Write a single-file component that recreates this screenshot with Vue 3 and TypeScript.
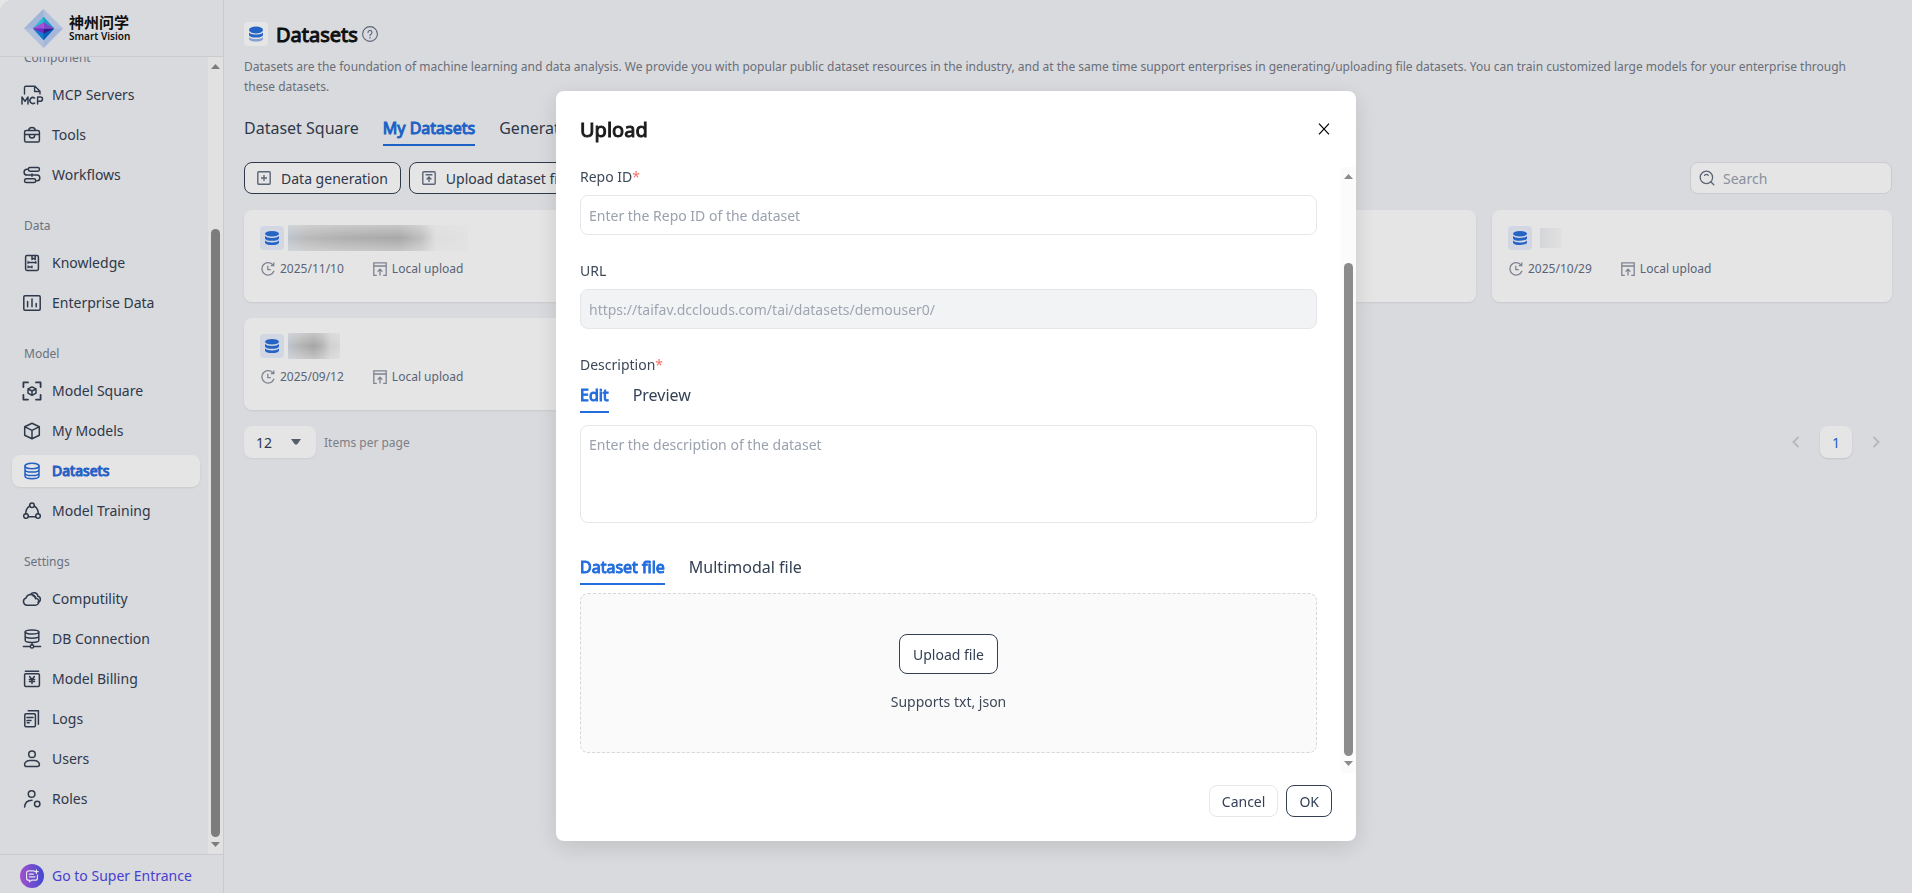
<script setup lang="ts">
import { ref } from 'vue'

interface NavItem { label: string; icon: string }
interface NavGroup { title: string; items: NavItem[] }
interface Card { date: string; mask: string }

const icons: Record<string, string> = {
  mcp: '<path d="M2.5 9V2.500a1.200 1.200 0 0 1 1.200-1.200H13l5 5V9M12.600 1.500v5h5.200" stroke-width="1.400"/><path d="M0 19v-7l3 4.400L6 12v7M12.600 13a3 3 0 1 0 0 5M15.600 19v-7h2.800a2.100 2.100 0 0 1 0 4.200h-2.800" stroke-width="1.500"/>',
  tools: '<rect x="2.6" y="5.4" width="14.8" height="11.6" rx="1.6"/><path d="M6.8 5.2c0-2 .8-2.8 3.2-2.8s3.2.8 3.2 2.8M2.8 9.4h14.4M7.4 9.6v1.2a2.6 2.2 0 0 0 5.2 0V9.600"/>',
  flow: '<rect x="6.4" y="2.4" width="11" height="3.8" rx="1.6"/><rect x="2.600" y="13.8" width="11" height="3.800" rx="1.600"/><path d="M6.200 4.300H5a2.900 2.900 0 0 0 0 5.800h10a2.800 2.800 0 0 1 0 5.600h-1.200M10 8.900v2.400"/>',
  book: '<rect x="3.600" y="2.600" width="12.800" height="14.800" rx="1.400"/><path d="M10 2.800v3.600l1.600-1 1.600 1V2.800M6.400 9.400h7.400M6.400 13.900h3.400" /><path d="M6 8.200v2.400M13.800 8.200v2.400M6 12.800v2.200M10 12.800v2.200" stroke-width="1"/>',
  chart: '<rect x="1.800" y="2.800" width="16.400" height="14.400" rx="1.200"/><path d="M5.600 8.600v5.200M10 6v7.800M14.200 10.400v3.400"/>',
  square: '<path d="M1.400 6V1.400H6M14 1.400h4.600V6M18.600 14v4.600H14M6 18.600H1.400V14" stroke-width="1.800"/><path d="M10 5.800l4 2.100v4.300l-4 2.200-4-2.200V7.900zM6.200 8l3.800 2 3.800-2M10 10v4.200" stroke-width="1.500"/>',
  cube: '<path d="M10 2.200l7.300 3.500v8.600L10 17.800l-7.300-3.500V5.700zM2.900 5.900L10 9.400l7.100-3.500M10 9.400v8.200"/>',
  db: '<ellipse cx="10" cy="5" rx="7" ry="2.800"/><path d="M3 5v10c0 1.500 3.100 2.700 7 2.700s7-1.200 7-2.700V5M3 8.400c0 1.500 3.100 2.700 7 2.700s7-1.200 7-2.700M3 11.900c0 1.500 3.100 2.700 7 2.700s7-1.200 7-2.700"/>',
  train: '<circle cx="10" cy="4.200" r="2.300"/><circle cx="4" cy="15" r="2.300"/><circle cx="16" cy="15" r="2.300"/><path d="M7.800 5C5.200 6.500 3.600 9.500 3.800 12.600M12.200 5c2.600 1.500 4.200 4.500 4 7.600M6.400 15.800h7.200"/>',
  cloud: '<path d="M4.600 16.200a3.700 3.700 0 0 1-.5-7.200 4.900 4.900 0 0 1 9.400.2 3.500 3.500 0 0 1-.3 7z"/><path d="M8.600 5.500a4 4 0 0 1 7.300 1.800 3 3 0 0 1 0 5.900M11 6.800c1.700.2 2.800 1.600 2.700 3"/>',
  dbnet: '<ellipse cx="10" cy="3" rx="6.800" ry="2"/><path d="M3.200 3v8.200c0 1.200 3 2.200 6.800 2.200s6.800-1 6.800-2.200V3M3.200 7c0 1.200 3 2.200 6.800 2.200S16.800 8.200 16.800 7M10 13.400v2.400M1.400 17.400h6.800M11.800 17.400h6.800"/><circle cx="10" cy="17.400" r="1.700"/>',
  bill: '<path d="M3.400 2.200h13.200"/><rect x="2.600" y="4.800" width="14.800" height="12.600" rx="1.200"/><path d="M7.600 7.600l2.400 2.800 2.400-2.800M7.400 10.600h5.200M7.400 12.600h5.200M10 10.600v4"/>',
  logs: '<path d="M6.200 1.800h10.200v13.400"/><rect x="2.800" y="4.800" width="10.600" height="13" rx="1.200"/><path d="M5 8.600h6M5 11.400h4M5.200 13.800h2"/>',
  user: '<circle cx="10" cy="5.200" r="3.300"/><path d="M2.600 15.600c0-2.400 2.600-4.200 5.200-4.200h4.400c2.600 0 5.200 1.800 5.200 4.200 0 1.400-.8 2-2 2H4.600c-1.200 0-2-.6-2-2z"/>',
  role: '<circle cx="9.600" cy="5" r="3.300"/><path d="M2.600 18c.3-4.200 3-6.800 7.400-6.800"/><circle cx="15.200" cy="15" r="2.700"/>',
}

const groups: NavGroup[] = [
  { title: 'Component', items: [
    { label: 'MCP Servers', icon: 'mcp' }, { label: 'Tools', icon: 'tools' }, { label: 'Workflows', icon: 'flow' } ] },
  { title: 'Data', items: [
    { label: 'Knowledge', icon: 'book' }, { label: 'Enterprise Data', icon: 'chart' } ] },
  { title: 'Model', items: [
    { label: 'Model Square', icon: 'square' }, { label: 'My Models', icon: 'cube' },
    { label: 'Datasets', icon: 'db' }, { label: 'Model Training', icon: 'train' } ] },
  { title: 'Settings', items: [
    { label: 'Computility', icon: 'cloud' }, { label: 'DB Connection', icon: 'dbnet' }, { label: 'Model Billing', icon: 'bill' },
    { label: 'Logs', icon: 'logs' }, { label: 'Users', icon: 'user' }, { label: 'Roles', icon: 'role' } ] },
]

const cards: Card[] = [
  { date: '2025/11/10', mask: 'long' },
  { date: '2025/11/05', mask: 'short' },
  { date: '2025/10/31', mask: 'short' },
  { date: '2025/10/29', mask: 'tiny' },
  { date: '2025/09/12', mask: 'short' },
]

const activeNav = ref('Datasets')
const pageTab = ref('My Datasets')
const pageTabs = ['Dataset Square', 'My Datasets', 'Generation Tasks']
const editTab = ref('Edit')
const fileTab = ref('Dataset file')
const open = ref(true)
</script>

<template>
  <div class="app">
    <aside class="sidebar">
      <div class="brand">
        <svg class="gem" viewBox="0 0 40 40" aria-hidden="true">
          <path d="M20 0l20 20-20 20L0 20z" fill="#c6d7f5" />
          <path d="M20 0L0 20h20z" fill="#b4caf4" /><path d="M20 40l20-20H20z" fill="#b9cdf3" />
          <path d="M20 8L9 20l11-5 11 5z" fill="#2ed3e6" />
          <path d="M20 8v8l11 4z" fill="#27a9e0" />
          <path d="M20 32L9 20l11 2 11-2z" fill="#1587e8" />
          <path d="M20 32V21l11-1z" fill="#0a6ad0" />
          <path d="M20 13.500L9 20l11 5z" fill="#b45cf0" />
          <path d="M20 13.500L31 20H20z" fill="#8f4be8" />
          <path d="M9 20h11v5z" fill="#7a35d8" />
          <path d="M20 20h11l-11 5z" fill="#3a1ca0" />
        </svg>
        <div class="brand-text">
          <span class="brand-cn">神州问学</span>
          <span class="brand-en">Smart Vision</span>
        </div>
      </div>
      <div class="nav-scroll">
        <nav class="nav">
          <section v-for="g in groups" :key="g.title" class="group">
            <h2 class="group-title">{{ g.title }}</h2>
            <a v-for="i in g.items" :key="i.label" href="#" class="nav-item" :class="{ active: i.label === activeNav }"
              @click.prevent="activeNav = i.label">
              <svg class="nav-icon" viewBox="0 0 20 20" aria-hidden="true" v-html="icons[i.icon]"></svg>
              <span>{{ i.label }}</span>
            </a>
          </section>
        </nav>
        <div class="scrollbar" aria-hidden="true">
          <span class="arrow up"></span>
          <div class="rail"><span class="rest nav-rest"></span><span class="thumb nav-thumb"></span></div>
          <span class="arrow down"></span>
        </div>
      </div>
      <a class="super" href="#">
        <svg class="super-icon" viewBox="0 0 24 24" aria-hidden="true">
          <defs><linearGradient id="sg" x1="0" x2="1"><stop offset="0" stop-color="#b45ae6" /><stop offset="1" stop-color="#4a52e8" /></linearGradient></defs>
          <circle cx="12" cy="12" r="12" fill="url(#sg)" />
          <path d="M14 6.800H8.600a2 2 0 0 0-2 2v5.400a2 2 0 0 0 2 2h.8v1.600l2.200-1.600h3.800a2 2 0 0 0 2-2V11M9.400 10.200h4M9.400 12.800h5.600M16.400 5.800v3.600M14.600 7.600h3.600" fill="none" stroke="#fff" stroke-width="1.200" stroke-linecap="round" stroke-linejoin="round" />
        </svg>
        <span>Go to Super Entrance</span>
      </a>
    </aside>

    <main class="main">
      <header class="head">
        <span class="head-icon">
          <svg viewBox="0 0 16 16" aria-hidden="true">
            <path d="M1 11v2c0 1.500 3.100 2.600 7 2.600s7-1.100 7-2.600v-2c-1 1.400-3.700 2-7 2s-6-.6-7-2z" fill="#93b4ea" />
            <path d="M1 6.600V9c0 1.500 3.100 2.600 7 2.600S15 10.500 15 9V6.600C14 8 11.300 8.600 8 8.600S2 8 1 6.600z" fill="#2a6fdc" />
            <ellipse cx="8" cy="4" rx="7" ry="3.400" fill="#2a6fdc" />
          </svg>
        </span>
        <h1>Datasets</h1>
        <svg class="help" viewBox="0 0 16 16" aria-hidden="true">
          <circle cx="8" cy="8" r="7.400" /><path d="M6 6.400a2 2 0 1 1 2.900 1.800c-.6.300-.9.700-.9 1.400M8 11.200v.9" />
        </svg>
      </header>
      <p class="desc">Datasets are the foundation of machine learning and data analysis. We provide you with popular public dataset resources in the industry, and at the same time support enterprises in generating/uploading file datasets. You can train customized large models for your enterprise through these datasets.</p>
      <div class="tabs page-tabs" role="tablist">
        <button v-for="t in pageTabs" :key="t" type="button" role="tab" class="tab" :class="{ on: t === pageTab }"
          :aria-selected="t === pageTab" @click="pageTab = t">{{ t }}</button>
      </div>
      <div class="toolbar">
        <button type="button" class="btn dark">
          <svg class="btn-icon" viewBox="0 0 14 14" aria-hidden="true"><rect x=".8" y=".8" width="12.400" height="12.400" rx="1" /><path d="M7 4v6M4 7h6" /></svg>
          <span>Data generation</span>
        </button>
        <button type="button" class="btn dark">
          <svg class="btn-icon" viewBox="0 0 14 14" aria-hidden="true"><rect x=".8" y=".8" width="12.400" height="12.400" rx="1" /><path d="M3.600 3.800h6.800M7 11V6.200M4.600 8.400L7 6l2.400 2.400" /></svg>
          <span>Upload dataset file</span>
        </button>
        <label class="search">
          <svg viewBox="0 0 16 16" aria-hidden="true"><circle cx="7.400" cy="7.400" r="6.200" /><path d="M12 12l2.800 2.800M5.600 5.200c1-.9 2.600-.9 3.600 0" /></svg>
          <input type="text" placeholder="Search" aria-label="Search" />
        </label>
      </div>
      <div class="cards">
        <article v-for="c in cards" :key="c.date" class="card">
          <div class="card-top">
            <span class="card-icon">
              <svg viewBox="0 0 14 14" aria-hidden="true">
                <path d="M0 9.600v1.800C0 13 3.100 14 7 14s7-1 7-2.600V9.600c-1 1.300-3.700 1.900-7 1.900s-6-.6-7-1.900z" />
                <path d="M0 5v2.200c0 1.600 3.100 2.600 7 2.600s7-1 7-2.600V5c-1 1.300-3.700 1.900-7 1.900S1 6.300 0 5z" />
                <ellipse cx="7" cy="2.800" rx="7" ry="2.800" />
              </svg>
            </span>
            <span class="mask" :class="c.mask"></span>
          </div>
          <div class="meta">
            <svg class="clock" viewBox="0 0 14 14" aria-hidden="true"><path d="M12 3a6.200 6.200 0 1 0 1 5.800M12.800.6v3H9.800M6.800 3.800v3.800h3" /></svg>
            <span class="date">{{ c.date }}</span>
            <svg class="local" viewBox="0 0 14 14" aria-hidden="true"><path d="M3.800 13.300H.8V.8h12.400v12.500h-3M.8 4h12.400M7 13.600V7.400M4.600 9.600L7 7.200l2.400 2.400" /></svg>
            <span>Local upload</span>
          </div>
        </article>
      </div>
      <footer class="pager">
        <div class="size">
          <select id="page-size"><option>12</option><option>24</option></select>
          <svg class="caret" viewBox="0 0 10 6" aria-hidden="true"><path d="M0 0h10L6 5.400H4z" /></svg>
        </div>
        <label class="per" for="page-size">Items per page</label>
        <div class="pages">
          <button type="button" aria-label="Previous page" disabled><svg viewBox="0 0 8 12" aria-hidden="true"><path d="M6.500 1L1.500 6l5 5" /></svg></button>
          <button type="button" class="current">1</button>
          <button type="button" aria-label="Next page" disabled><svg viewBox="0 0 8 12" aria-hidden="true"><path d="M1.500 1l5 5-5 5" /></svg></button>
        </div>
      </footer>
    </main>
  </div>

  <div v-if="open" class="overlay">
    <div class="modal" role="dialog" aria-modal="true" aria-labelledby="dlg-title">
      <header class="modal-head">
        <h2 id="dlg-title">Upload</h2>
        <button type="button" class="close" aria-label="Close" @click="open = false">
          <svg viewBox="0 0 12 12" aria-hidden="true"><path d="M1 .6l10 10.800M11 .6L1 11.400" /></svg>
        </button>
      </header>
      <div class="modal-body">
        <form class="form" @submit.prevent>
          <label class="field-label" for="repo">Repo ID<b>*</b></label>
          <input id="repo" class="field" type="text" placeholder="Enter the Repo ID of the dataset" />
          <label class="field-label" for="url">URL</label>
          <input id="url" class="field" type="text" disabled value="https://taifav.dcclouds.com/tai/datasets/demouser0/" />
          <label class="field-label desc-label" for="description">Description<b>*</b></label>
          <div class="tabs" role="tablist">
            <button v-for="t in ['Edit', 'Preview']" :key="t" type="button" role="tab" class="tab" :class="{ on: t === editTab }"
              :aria-selected="t === editTab" @click="editTab = t">{{ t }}</button>
          </div>
          <textarea id="description" class="field area" placeholder="Enter the description of the dataset"></textarea>
          <div class="tabs file-tabs" role="tablist">
            <button v-for="t in ['Dataset file', 'Multimodal file']" :key="t" type="button" role="tab" class="tab" :class="{ on: t === fileTab }"
              :aria-selected="t === fileTab" @click="fileTab = t">{{ t }}</button>
          </div>
          <div class="drop">
            <button type="button" class="btn dark tall">Upload file</button>
            <span>Supports txt, json</span>
          </div>
        </form>
        <div class="scrollbar" aria-hidden="true">
          <span class="arrow up"></span>
          <div class="rail"><span class="rest form-rest"></span><span class="thumb form-thumb"></span></div>
          <span class="arrow down"></span>
        </div>
      </div>
      <footer class="modal-foot">
        <button type="button" class="btn" @click="open = false">Cancel</button>
        <button type="button" class="btn dark">OK</button>
      </footer>
    </div>
  </div>
</template>

<style>
html, body, #app { height: 100%; }
body { background: #fff; overflow: hidden; }
.app, .overlay, .app *, .overlay * { box-sizing: border-box; }
.app, .overlay, .app button, .app input, .app select, .overlay button, .overlay input, .overlay textarea {
  font-family: "Noto Sans", "Noto Sans CJK SC", sans-serif;
  font-size: 14px;
  line-height: 20px;
}
</style>

<style scoped>
.app { display: flex; height: 100vh; background: #f2f3f6; color: #344054; border-radius: 12px 0 0 0; overflow: hidden; }
h1, h2, p { margin: 0; }
button { cursor: pointer; color: inherit; padding: 0; }

.sidebar { width: 224px; flex: none; display: flex; flex-direction: column; border-right: 1px solid #e1e3e7; }
.brand { display: flex; align-items: center; gap: 6px; height: 57px; flex: none; padding: 0 24px; border-bottom: 1px solid #e1e3e7; }
.gem { width: 39px; height: 39px; }
.brand-text { display: flex; flex-direction: column; color: #111; }
.brand-cn { font: 700 15px/16px "Noto Sans CJK SC", sans-serif; }
.brand-en { font-size: 10px; line-height: 12px; font-weight: 600; white-space: nowrap; }

.nav-scroll { flex: 1; min-height: 0; display: flex; overflow: hidden; }
.nav { flex: 1; display: flex; flex-direction: column; justify-content: flex-end; padding: 0 8px 39px 12px; }
.group { display: flex; flex-direction: column; gap: 8px; }
.group + .group { margin-top: 25px; }
.group-title { font-size: 12px; line-height: 20px; font-weight: 400; color: #757f90; padding-left: 12px; margin-bottom: 3px; }
.nav-item { display: flex; align-items: center; gap: 10px; height: 32px; padding: 0 10px; border-radius: 8px; color: #344054; text-decoration: none; white-space: nowrap; }
.nav-item.active { background: #fff; color: #2a6bdc; box-shadow: 0 1px 2px rgba(16, 24, 40, .08); }
.nav-item.active span { -webkit-text-stroke: 1px; }
.nav-icon { width: 20px; height: 20px; flex: none; overflow: visible; fill: none; stroke: currentColor; stroke-width: 1.5; stroke-linecap: round; stroke-linejoin: round; }
.super { flex: none; height: 39px; display: flex; align-items: center; gap: 8px; padding: 4px 20px 0; border-top: 1px solid #e1e3e7; color: #5147ea; text-decoration: none; white-space: nowrap; }
.super-icon { width: 24px; height: 24px; }

.scrollbar { width: 15px; flex: none; display: flex; flex-direction: column; padding: 7px 3px; background: #fbfbfb; }
.arrow { width: 9px; height: 5px; background: #8b8b8b; }
.up { clip-path: polygon(50% 0, 100% 100%, 0 100%); }
.down { clip-path: polygon(0 0, 100% 0, 50% 100%); }
.rail { flex: 1; margin: 5px 0; display: flex; flex-direction: column; }
.thumb { background: #8b8b8b; border-radius: 5px; }
.nav-rest { flex: 155; }
.nav-thumb { flex: 608; }
.form-rest { flex: 79; }
.form-thumb { flex: 492; }

.main { flex: 1; min-width: 0; padding: 20px 20px 0; }
.head { display: flex; align-items: center; height: 28px; }
.head-icon { width: 24px; height: 24px; border-radius: 4px; background: #fff; display: grid; place-items: center; margin-right: 8px; }
.head-icon svg { width: 16px; height: 16px; }
h1 { font-size: 20px; line-height: 28px; padding-top: 2px; font-weight: 400; -webkit-text-stroke: 1px; color: #101114; }
.help { width: 16px; height: 16px; margin-left: 4px; fill: none; stroke: #667085; stroke-width: 1.1; stroke-linecap: round; }
.desc { margin-top: 9px; padding-right: 24px; font-size: 12px; line-height: 20px; color: #757b88; }

.tabs { display: flex; gap: 24px; }
.tab { height: 32px; border: 0; border-bottom: 2px solid transparent; background: none; white-space: nowrap; color: #344054; }
.app .tab, .overlay .tab { font-size: 16px; line-height: 24px; padding-bottom: 2px; }
.tab.on { color: #236ddd; border-color: #236ddd; -webkit-text-stroke: 1px; }
.page-tabs { margin-top: 17px; }

.toolbar { display: flex; gap: 8px; margin-top: 16px; }
.btn { display: inline-flex; align-items: center; gap: 10px; height: 32px; padding: 2px 12px 0; border: 1px solid #e4e6ea; border-radius: 8px; background: #fff; color: #344054; white-space: nowrap; }
.btn.dark { border-color: #344054; }
.btn.tall { height: 40px; padding: 2px 13px 0; }
.btn-icon { width: 14px; height: 14px; margin-bottom: 2px; fill: none; stroke: #667085; stroke-width: 1.4; }
.search { margin-left: auto; width: 202px; height: 32px; display: flex; align-items: center; gap: 8px; padding: 0 8px; border: 1px solid #e1e3e7; border-radius: 8px; background: #fff; }
.search svg { width: 16px; height: 16px; flex: none; fill: none; stroke: #667085; stroke-width: 1.3; stroke-linecap: round; }
.search input { flex: 1; min-width: 0; border: 0; padding: 2px 0 0; outline: 0; background: none; }
input::placeholder, textarea::placeholder { color: #9aa1af; opacity: 1; }

.cards { margin-top: 16px; display: grid; grid-template-columns: repeat(4, 1fr); gap: 16px; }
.card { height: 92px; padding: 16px; border-radius: 8px; background: #fff; box-shadow: 0 1px 2px rgba(16, 24, 40, .08); }
.card-top { display: flex; align-items: center; gap: 4px; height: 24px; }
.card-icon { width: 24px; height: 24px; border-radius: 4px; background: #ebf0fd; display: grid; place-items: center; }
.card-icon svg { width: 14px; height: 14px; fill: #2a6fdc; }
.mask { --fade: linear-gradient(rgba(255, 255, 255, .5), rgba(255, 255, 255, 0) 50%, rgba(255, 255, 255, .5)); height: 26px; }
.long { width: 180px; background: var(--fade), linear-gradient(90deg, #d3dbe6, #cfcfcf 10%, #c4c4c4 30%, #bcbcbc 62%, #d5d5d5 74%, #f8f8f8 82%, #fcfcfc); }
.short { width: 52px; background: var(--fade), linear-gradient(90deg, #d3dbe6, #c8c8c8 25%, #b8b8b8 50%, #cacaca 66%, #e9e9e9 82%, #f0f0f0); }
.tiny { width: 22px; height: 20px; margin-left: 4px; background: linear-gradient(90deg, #eceef2, #fbfbfb); }
.meta { display: flex; align-items: center; margin-top: 9px; font-size: 12px; line-height: 20px; color: #667085; }
.meta svg { width: 14px; height: 14px; margin: 0 5px 0 1px; fill: none; stroke: #8d93a1; stroke-width: 1.3; }
.date { margin-right: 28px; }

.pager { display: flex; align-items: center; gap: 8px; margin-top: 16px; }
.size { display: grid; align-items: center; width: 72px; height: 32px; border-radius: 8px; background: #fff; box-shadow: 0 1px 2px rgba(16, 24, 40, .06); }
.size > * { grid-area: 1 / 1; }
.size select { width: 72px; height: 32px; border: 0; padding: 2px 12px 0; background: none; appearance: none; color: #344054; }
.caret { width: 10px; height: 6px; justify-self: end; margin-right: 15px; fill: #5f6878; pointer-events: none; }
.per { font-size: 12px; padding-top: 2px; color: #8b8e96; }
.pages { margin-left: auto; display: flex; gap: 8px; }
.pages button { width: 32px; height: 32px; border: 0; border-radius: 8px; background: none; display: grid; place-items: center; color: #2a6bdc; }
.pages .current { padding-top: 2px; background: #fff; box-shadow: 0 1px 2px rgba(16, 24, 40, .1); }
.pages svg { width: 8px; height: 12px; fill: none; stroke: #cfcfcf; stroke-width: 2; }

.overlay { position: fixed; inset: 0; display: flex; justify-content: center; align-items: flex-start; padding-top: 91px; background: rgba(0, 0, 0, .1); color: #3d4858; }
.modal { width: min(800px, 90%); background: #fff; border-radius: 8px; overflow: hidden; box-shadow: 0 6px 24px rgba(0, 0, 0, .12); }
.modal-head { display: flex; justify-content: space-between; align-items: center; height: 76px; padding: 0 24px; }
.modal-head h2 { font-size: 20px; line-height: 28px; padding-top: 2px; font-weight: 400; -webkit-text-stroke: 1px; color: #1a1a1a; }
.close { width: 16px; height: 16px; border: 0; background: none; display: grid; place-items: center; }
.close svg { width: 12px; height: 12px; fill: none; stroke: #000; stroke-width: 1.2; }
.modal-body { display: flex; }
.form { flex: 1; min-width: 0; display: flex; flex-direction: column; padding: 0 24px 20px; }
.field-label { margin-bottom: 8px; }
.field-label b { color: #f97066; font-weight: 400; }
.desc-label { margin-bottom: 6px; }
.field { width: 100%; height: 40px; margin: 0 0 26px; padding: 0 8px; border: 1px solid #e4e6ea; border-radius: 8px; background: #fff; color: #344054; outline: 0; }
.field:disabled { background: #f2f3f5; color: #9fa5b1; }
.area { height: 98px; padding: 9px 8px; margin: 12px 0 30px; resize: none; }
.drop { margin-top: 8px; height: 160px; display: flex; flex-direction: column; align-items: center; padding-top: 40px; gap: 18px; border: 1px dashed #d5d7db; border-radius: 8px; background: #fafafa; }
.modal-foot { display: flex; justify-content: flex-end; gap: 8px; padding: 12px 24px 24px; }
</style>
